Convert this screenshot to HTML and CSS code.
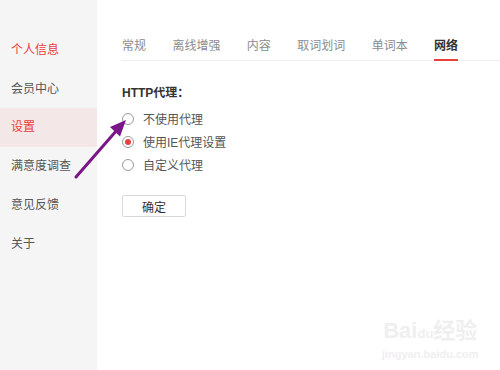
FILE: index.html
```html
<!DOCTYPE html>
<html lang="zh-CN">
<head>
    <meta charset="UTF-8">
    <title>设置 - 网络</title>
    <link rel="stylesheet" href="styles.css">
</head>
<body>
    <!-- 左侧菜单 -->
    <div class="sidebar">
        <div class="menu-item red">个人信息</div>
        <div class="menu-item">会员中心</div>
        <div class="menu-item red active">设置</div>
        <div class="menu-item">满意度调查</div>
        <div class="menu-item">意见反馈</div>
        <div class="menu-item">关于</div>
    </div>

    <div class="main">
        <div class="tabs">
            <span class="tab">常规</span>
            <span class="tab">离线增强</span>
            <span class="tab">内容</span>
            <span class="tab">取词划词</span>
            <span class="tab">单词本</span>
            <span class="tab current">网络</span>
        </div>

        <p class="section-title">HTTP代理：</p>
        <label class="radio-row"><span class="radio"></span>不使用代理</label>
        <label class="radio-row"><span class="radio checked"></span>使用IE代理设置</label>
        <label class="radio-row"><span class="radio"></span>自定义代理</label>

        <button class="ok-button">确定</button>
    </div>

    <!-- 箭头标注 -->
    <svg class="arrow" width="500" height="370" viewBox="0 0 500 370">
        <line x1="76" y1="177" x2="117" y2="130" stroke="#7a1687" stroke-width="3" stroke-linecap="round"/>
        <polygon points="126,120 110,127 120,136.5" fill="#7a1687"/>
    </svg>

    <!-- 水印 -->
    <div class="watermark">
        <div class="wm-logo">Bai<span class="wm-du">du</span>经验</div>
        <div class="wm-url">jingyan.baidu.com</div>
    </div>
</body>
</html>
```

FILE: styles.css
```css
body {
    margin: 0;
    width: 500px;
    height: 370px;
    display: flex;
    background-color: #ffffff;
    font-family: "Liberation Sans", "Noto Sans CJK SC", sans-serif;
    font-size: 12px;
    color: #555;
    overflow: hidden;
}

/* 左侧菜单 */
.sidebar {
    width: 97px;
    flex-shrink: 0;
    background-color: #f5f5f5;
    padding-top: 31px;
}

.menu-item {
    height: 39px;
    line-height: 39px;
    padding-left: 11px;
    color: #555;
}

.menu-item.red {
    color: #e8403c;
}

.menu-item.active {
    margin-top: -1px;
    background-color: #f3e7e7;
}

/* 右侧内容 */
.main {
    flex: 1;
    padding: 36px 0 0 25px;
}

.tabs {
    display: flex;
    gap: 26.4px;
    border-bottom: 1px solid #eeeeee;
}

.tab {
    line-height: 20px;
    padding-bottom: 3px;
    border-bottom: 2px solid transparent;
    margin-bottom: -1px;
    color: #8c8c8c;
}

.tab.current {
    color: #333;
    font-weight: bold;
    border-bottom-color: #e8403c;
}

.section-title {
    margin: 22px 0 4px;
    line-height: 20px;
    font-weight: bold;
    color: #333;
}

.radio-row {
    display: flex;
    align-items: center;
    height: 23px;
    color: #555;
}

.radio {
    width: 10px;
    height: 10px;
    border: 1px solid #9a9a9a;
    border-radius: 50%;
    margin-right: 9px;
    position: relative;
}

.radio.checked::after {
    content: "";
    position: absolute;
    left: 2px;
    top: 2px;
    width: 6px;
    height: 6px;
    border-radius: 50%;
    background-color: #e8403c;
}

.ok-button {
    display: block;
    margin-top: 19px;
    width: 64px;
    height: 22px;
    border: 1px solid #d9d9d9;
    border-radius: 2px;
    background-color: #ffffff;
    font-family: inherit;
    font-size: 12px;
    color: #333;
    padding: 0;
}

.arrow {
    position: absolute;
    left: 0;
    top: 0;
}

.watermark {
    position: absolute;
    left: 382px;
    top: 318px;
    color: #efefef;
    text-align: center;
}

.wm-logo {
    font-size: 22px;
    font-weight: bold;
    line-height: 26px;
}

.wm-du {
    font-size: 13px;
}

.wm-url {
    font-size: 11px;
    font-weight: bold;
    line-height: 14px;
}
```
